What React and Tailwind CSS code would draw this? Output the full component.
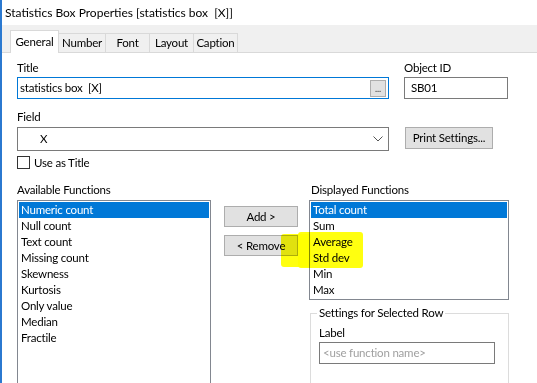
import React from 'react';

const available = ['Numeric count', 'Null count', 'Text count', 'Missing count', 'Skewness', 'Kurtosis', 'Only value', 'Median', 'Fractile'];
const displayed = ['Total count', 'Sum', 'Average', 'Std dev', 'Min', 'Max'];
const tabs = ['General', 'Number', 'Font', 'Layout', 'Caption'];
const tabWidths = ['w-[49px]', 'w-[47px]', 'w-[44px]', 'w-[44px]', 'w-[44px]'];

function ListBox({ items, className }) {
  return (
    <div className={`border border-[#828790] bg-white p-[1px] ${className}`}>
      {items.map((item, i) => (
        <div
          key={item}
          className={`h-[16px] leading-[16px] pl-[2px] whitespace-nowrap ${i === 0 ? 'bg-[#0078d7] text-white' : ''}`}
        >
          {item}
        </div>
      ))}
    </div>
  );
}

function Button({ children, className }) {
  return (
    <div className={`flex items-center justify-center border border-[#adadad] bg-[#e1e1e1] ${className}`}>
      {children}
    </div>
  );
}

export default function App() {
  return (
    <div
      className="relative w-[537px] h-[383px] overflow-hidden bg-white border-l-2 border-[#2b79d0] text-[11.5px] tracking-[-0.2px] text-black"
      style={{ fontFamily: 'Lato, "Liberation Sans", sans-serif' }}
    >
      {/* title bar */}
      <div className="h-[25px] pl-[3px] flex items-center text-[12px] tracking-normal">
        Statistics Box Properties [statistics box&nbsp;&nbsp;[X]]
      </div>

      {/* tab strip */}
      <div className="h-[28px] bg-[#f0f0f0] border-b border-[#d9d9d9] flex items-end pl-[8px]">
        {tabs.map((t, i) => (
          <div
            key={t}
            className={
              i === 0
                ? `${tabWidths[i]} h-[23px] -mb-px bg-white border border-b-0 border-[#d9d9d9] flex items-center justify-center`
                : `${tabWidths[i]} h-[19px] bg-[#f0f0f0] border border-b-0 border-l-0 border-[#d9d9d9] flex items-center justify-center`
            }
          >
            {t}
          </div>
        ))}
      </div>

      {/* panel */}
      <div className="pl-[15px] pt-[7px]">
        {/* title / object id */}
        <div className="flex">
          <div className="w-[372px]">
            <div className="h-[16px] leading-[16px] mb-px">Title</div>
            <div className="h-[22px] border border-[#0078d7] flex items-center justify-between pl-[2px] pr-[2px]">
              <span>statistics box&nbsp;&nbsp;[X]</span>
              <div className="w-[16px] h-[17px] border border-[#adadad] bg-[#e1e1e1] flex items-end justify-center text-[9px] leading-[10px] pb-[2px] text-[#333]">
                ...
              </div>
            </div>
          </div>
          <div className="ml-[15px] w-[104px]">
            <div className="h-[16px] leading-[16px] mb-px">Object ID</div>
            <div className="h-[22px] border border-[#7a7a7a] flex items-center pl-[6px]">SB01</div>
          </div>
        </div>

        {/* field */}
        <div className="mt-[10px] h-[16px] leading-[16px] mb-[2px]">Field</div>
        <div className="flex items-start">
          <div className="w-[372px] h-[24px] border border-[#7a7a7a] flex items-center justify-between pl-[22px] pr-[3px]">
            <span>X</span>
            <svg width="10" height="6" viewBox="0 0 10 6" className="mr-[2px]">
              <path d="M0.5 0.5 L5 5 L9.5 0.5" fill="none" stroke="#555" strokeWidth="1" />
            </svg>
          </div>
          <Button className="ml-[16px] w-[88px] h-[22px]">Print Settings...</Button>
        </div>

        {/* checkbox */}
        <div className="mt-[5px] flex items-center h-[13px]">
          <div className="w-[13px] h-[13px] border border-[#333] bg-white" />
          <span className="ml-[4px]">Use as Title</span>
        </div>

        {/* functions */}
        <div className="mt-[13px] flex items-start">
          <div className="w-[194px]">
            <div className="h-[16px] leading-[16px] mb-[2px]">Available Functions</div>
            <ListBox items={available} className="h-[200px]" />
          </div>
          <div className="ml-[13px] mt-[24px] flex flex-col gap-[8px]">
            <Button className="w-[74px] h-[21px]">Add &gt;</Button>
            <Button className="w-[74px] h-[21px]">&lt; Remove</Button>
          </div>
          <div className="ml-[11px] w-[200px]">
            <div className="h-[16px] leading-[16px] mb-[2px] pl-[2px]">Displayed Functions</div>
            <ListBox items={displayed} className="h-[100px]" />
            <div className="mt-[13px] ml-[1px] w-[199px] h-[90px] border border-[#dcdcdc] relative px-[8px] pt-[11px]">
              <div className="absolute -top-[9px] left-[6px] bg-white px-[2px] leading-[16px]">Settings for Selected Row</div>
              <div className="h-[16px] leading-[16px] mb-[1px]">Label</div>
              <div className="w-[176px] h-[22px] border border-[#7a7a7a] flex items-center pl-[3px] text-[#a0a0a0]">
                &lt;use function name&gt;
              </div>
            </div>
          </div>
        </div>
      </div>

      {/* highlighter marks */}
      <div className="absolute left-[279px] top-[234px] w-[30px] h-[33px] bg-[#ffff10] mix-blend-multiply rounded-[3px]" />
      <div className="absolute left-[296px] top-[232px] w-[65px] h-[36px] bg-[#ffff10] mix-blend-multiply rounded-[3px]" />
    </div>
  );
}
